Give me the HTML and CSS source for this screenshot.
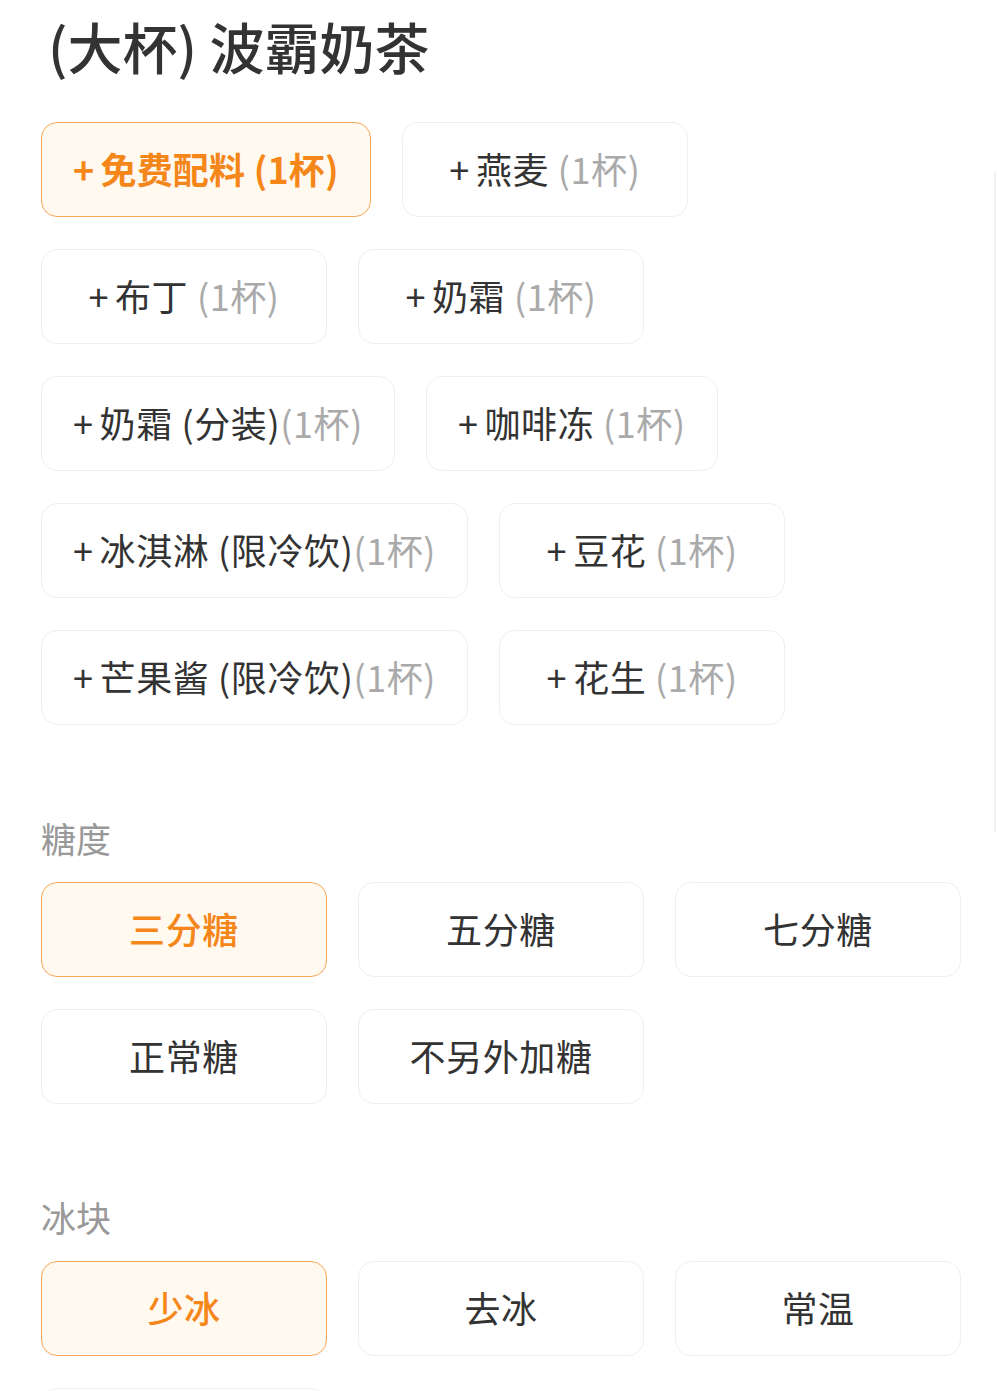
FILE: index.html
```html
<!DOCTYPE html>
<html lang="zh-CN">

<head>
    <meta charset="UTF-8">
    <meta name="viewport" content="width=device-width, initial-scale=1.0">
    <title>波霸奶茶</title>
    <link rel="stylesheet" href="styles.css">
</head>

<body>
    <div class="page">
        <h1 class="title">(大杯) 波霸奶茶</h1>

        <div class="options">
            <div class="opt active strong"><span class="plus">+</span>免费配料 (1杯)</div>
            <div class="opt"><span class="plus">+</span>燕麦 <span class="qty">(1杯)</span></div>
            <div class="opt"><span class="plus">+</span>布丁 <span class="qty">(1杯)</span></div>
            <div class="opt"><span class="plus">+</span>奶霜 <span class="qty">(1杯)</span></div>
            <div class="opt"><span class="plus">+</span>奶霜 (分装)<span class="qty">(1杯)</span></div>
            <div class="opt"><span class="plus">+</span>咖啡冻 <span class="qty">(1杯)</span></div>
            <div class="opt"><span class="plus">+</span>冰淇淋 (限冷饮)<span class="qty">(1杯)</span></div>
            <div class="opt"><span class="plus">+</span>豆花 <span class="qty">(1杯)</span></div>
            <div class="opt"><span class="plus">+</span>芒果酱 (限冷饮)<span class="qty">(1杯)</span></div>
            <div class="opt"><span class="plus">+</span>花生 <span class="qty">(1杯)</span></div>
        </div>

        <p class="label">糖度</p>
        <div class="options">
            <div class="opt active">三分糖</div>
            <div class="opt">五分糖</div>
            <div class="opt">七分糖</div>
            <div class="opt">正常糖</div>
            <div class="opt">不另外加糖</div>
        </div>

        <p class="label">冰块</p>
        <div class="options">
            <div class="opt active">少冰</div>
            <div class="opt">去冰</div>
            <div class="opt">常温</div>
            <div class="opt"></div>
        </div>
    </div>
    <div class="scroll_line"></div>
</body>
</html>
```

FILE: styles.css
```css
body {
    margin: 0;
    background: #fff;
    font-family: "Noto Sans CJK SC", "Noto Sans", sans-serif;
    color: #333;
    overflow: hidden;
}

.page {
    padding: 0 35px 0 41px;
}

.title {
    margin: 9px 0 40px;
    padding-left: 7px;
    font-size: 55px;
    line-height: 73px;
    font-weight: 500;
    color: #333;
}

.options {
    display: flex;
    flex-wrap: wrap;
    gap: 32px 31px;
}

.opt {
    box-sizing: border-box;
    min-width: 286px;
    height: 95px;
    padding: 0 31px 4px;
    display: flex;
    align-items: center;
    justify-content: center;
    border: 1px solid #efefef;
    border-radius: 16px;
    font-size: 36px;
    letter-spacing: 0.6px;
    color: #333;
    white-space: pre;
}

.opt .plus {
    margin-right: 6px;
}

.opt .qty {
    color: #aaa;
}

.opt.active {
    background: #fff9ef;
    border-color: #f6a75c;
    color: #f5861a;
    font-weight: 500;
}

.opt.strong {
    font-weight: 700;
    letter-spacing: 0.2px;
}

.label {
    margin: 89px 0 20px;
    font-size: 35px;
    line-height: 48px;
    color: #999;
}

.scroll_line {
    position: absolute;
    top: 172px;
    left: 994px;
    width: 2px;
    height: 660px;
    background: #f2f2f2;
}
```
